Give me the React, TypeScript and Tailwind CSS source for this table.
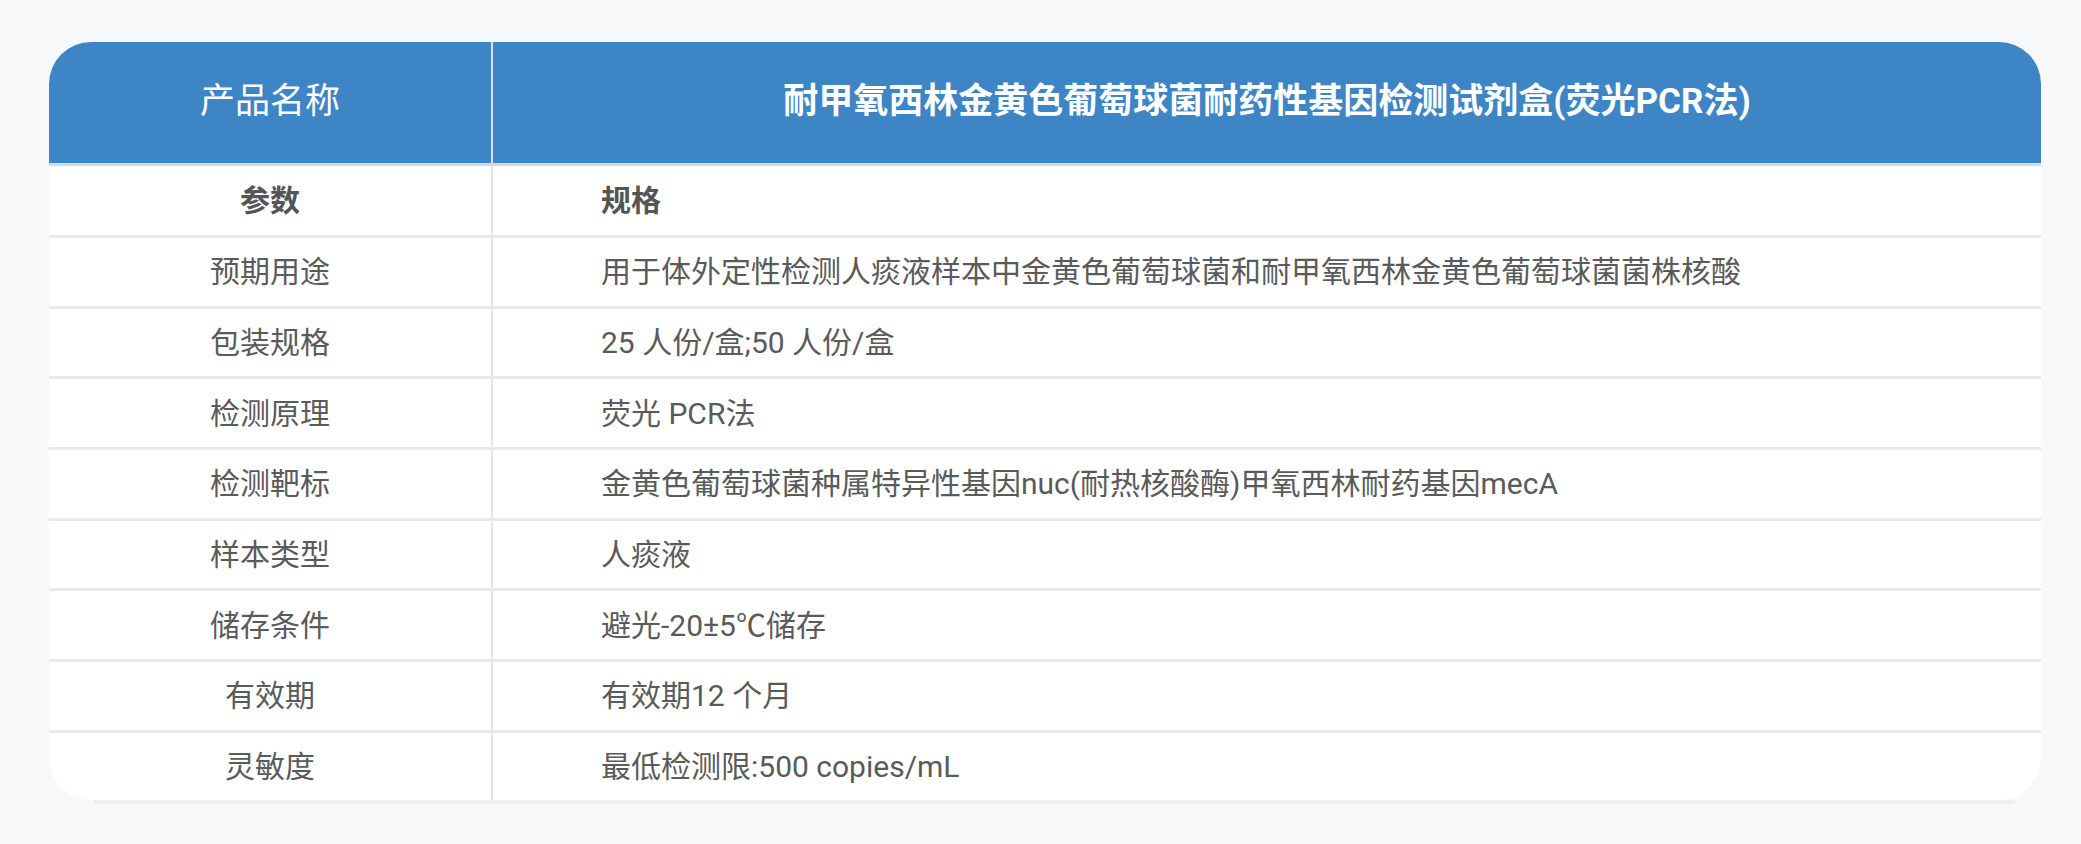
import React from 'react';

const rows: [string, string][] = [
  ['预期用途', '用于体外定性检测人痰液样本中金黄色葡萄球菌和耐甲氧西林金黄色葡萄球菌菌株核酸'],
  ['包装规格', '25 人份/盒;50 人份/盒'],
  ['检测原理', '荧光 PCR法'],
  ['检测靶标', '金黄色葡萄球菌种属特异性基因nuc(耐热核酸酶)甲氧西林耐药基因mecA'],
  ['样本类型', '人痰液'],
  ['储存条件', '避光-20±5℃储存'],
  ['有效期', '有效期12 个月'],
  ['灵敏度', '最低检测限:500 copies/mL'],
];

export default function App() {
  return (
    <div
      className="min-h-[844px] w-full bg-[#f7f8fa] pt-[42px] pl-[49px] pr-[40px]"
      style={{ fontFamily: 'Roboto, "Noto Sans CJK SC", sans-serif' }}
    >
      {/* 表格卡片 */}
      <div className="overflow-hidden rounded-[42px] bg-white">
        {/* 表头 */}
        <div className="grid h-[124px] grid-cols-[444px_1fr] border-b-[3px] border-[#d3dce6] bg-[#3e85c6] text-white">
          <div className="flex items-center justify-center border-r-2 border-[#d9e5f1] text-[35px]">
            产品名称
          </div>
          <div className="flex items-center justify-center text-[35px] font-bold">
            耐甲氧西林金黄色葡萄球菌耐药性基因检测试剂盒(荧光PCR法)
          </div>
        </div>

        {/* 参数 / 规格 */}
        <div className="grid h-[72px] grid-cols-[444px_1fr] border-b-[3px] border-[#e9e9e9] text-[30px] text-[#555]">
          <div className="flex items-center justify-center border-r-2 border-[#e6e6e6] font-bold">
            参数
          </div>
          <div className="flex items-center pl-[108px] font-bold">规格</div>
        </div>

        {/* 行 */}
        {rows.map(([label, value], i) => (
          <div
            key={label}
            className={`grid grid-cols-[444px_1fr] text-[30px] text-[#5a5a5a] ${
              i < rows.length - 1 ? 'h-[70.7px] border-b-[3px] border-[#e9e9e9]' : 'h-[67px]'
            }`}
          >
            <div className="flex items-center justify-center border-r-2 border-[#e6e6e6]">
              {label}
            </div>
            <div className="flex items-center whitespace-nowrap pl-[108px]">{value}</div>
          </div>
        ))}
      </div>
      <div className="ml-[45px] mr-[26px] h-[4px] bg-[#efefef]" />
    </div>
  );
}
